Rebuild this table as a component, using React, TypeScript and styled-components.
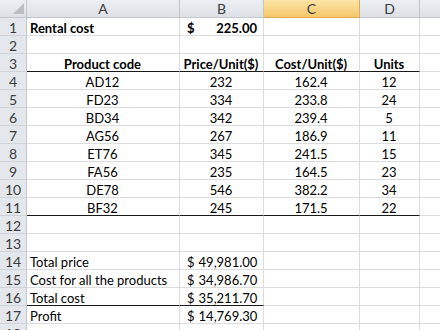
import styled, { createGlobalStyle, css } from "styled-components";

const GlobalStyle = createGlobalStyle`
  body {
    margin: 0;
    background: #fff;
  }
`;

const Sheet = styled.div`
  display: grid;
  grid-template-columns: 27px 153px 84px 96px 60px 40px;
  grid-auto-rows: 18px;
  width: 440px;
  height: 330px;
  overflow: hidden;
  font-family: Lato, "Liberation Sans", sans-serif;
  font-size: 13px;
  color: #000;
`;

const Corner = styled.div`
  background: linear-gradient(#eceff3, #dde1e6);
  border-right: 1px solid #c3c7cc;
  border-bottom: 1px solid #c3c7cc;
  box-sizing: border-box;
  display: flex;
  align-items: flex-end;
  justify-content: flex-end;
  padding: 0 2px 3px 0;
`;

const ColHead = styled.div<{ $selected?: boolean }>`
  box-sizing: border-box;
  display: flex;
  align-items: center;
  justify-content: center;
  color: #3c3c3c;
  font-size: 14px;
  background: linear-gradient(#eceff3, #dde1e6);
  border-right: 1px solid #c3c7cc;
  border-bottom: 1px solid #c3c7cc;
  ${(p) =>
    p.$selected &&
    css`
      background: linear-gradient(#fbe4a6, #f5c86a);
      border-right-color: #e2ab4f;
      border-bottom-color: #e2ab4f;
    `}
`;

const RowHead = styled.div`
  box-sizing: border-box;
  display: flex;
  align-items: center;
  justify-content: center;
  padding-top: 1px;
  font-size: 14px;
  color: #3c3c3c;
  background: #e4e8ed;
  border-right: 1px solid #c3c7cc;
  border-bottom: 1px solid #cfd3d8;
`;

const Cell = styled.div<{ $align?: "left" | "center" | "right"; $bold?: boolean; $line?: boolean }>`
  box-sizing: border-box;
  display: flex;
  align-items: center;
  justify-content: ${(p) =>
    p.$align === "center" ? "center" : p.$align === "right" ? "flex-end" : "flex-start"};
  padding: 2px 4px 0 3px;
  font-weight: ${(p) => (p.$bold ? 700 : 400)};
  white-space: nowrap;
  border-right: 1px solid #dadcdd;
  border-bottom: 1px solid ${(p) => (p.$line ? "#1a1a1a" : "#dadcdd")};
`;

const Money = styled(Cell)`
  justify-content: space-between;
  gap: 4px;
  padding: 2px 6px 0 7px;
`;

const products = [
  ["AD12", 232, "162.4", 12],
  ["FD23", 334, "233.8", 24],
  ["BD34", 342, "239.4", 5],
  ["AG56", 267, "186.9", 11],
  ["ET76", 345, "241.5", 15],
  ["FA56", 235, "164.5", 23],
  ["DE78", 546, "382.2", 34],
  ["BF32", 245, "171.5", 22],
];

const totals = [
  ["Total price", "49,981.00"],
  ["Cost for all the products", "34,986.70"],
  ["Total cost", "35,211.70"],
  ["Profit", "14,769.30"],
];

function Blank({ n }: { n: number }) {
  return (
    <>
      {Array.from({ length: n }, (_, i) => (
        <Cell key={i} />
      ))}
    </>
  );
}

export default function App() {
  return (
    <>
      <GlobalStyle />
      <Sheet>
        <Corner>
          <svg width="11" height="11" viewBox="0 0 11 11">
            <polygon points="11,0 11,11 0,11" fill="#b9bec5" />
          </svg>
        </Corner>
        <ColHead>A</ColHead>
        <ColHead>B</ColHead>
        <ColHead $selected>C</ColHead>
        <ColHead>D</ColHead>
        <ColHead />

        <RowHead>1</RowHead>
        <Cell $bold>Rental cost</Cell>
        <Money $bold>
          <span>$</span>
          <span>225.00</span>
        </Money>
        <Blank n={3} />

        <RowHead>2</RowHead>
        <Blank n={5} />

        <RowHead>3</RowHead>
        <Cell $bold $align="center" $line>Product code</Cell>
        <Cell $bold $align="center" $line>Price/Unit($)</Cell>
        <Cell $bold $align="center" $line>Cost/Unit($)</Cell>
        <Cell $bold $align="center" $line>Units</Cell>
        <Cell />

        {products.map(([code, price, cost, units], i) => {
          const last = i === products.length - 1;
          return (
            <div key={code} style={{ display: "contents" }}>
              <RowHead>{i + 4}</RowHead>
              <Cell $align="center" $line={last}>{code}</Cell>
              <Cell $align="center" $line={last}>{price}</Cell>
              <Cell $align="center" $line={last}>{cost}</Cell>
              <Cell $align="center" $line={last}>{units}</Cell>
              <Cell />
            </div>
          );
        })}

        <RowHead>12</RowHead>
        <Blank n={5} />
        <RowHead>13</RowHead>
        <Blank n={5} />

        {totals.map(([label, value], i) => (
          <div key={label} style={{ display: "contents" }}>
            <RowHead>{i + 14}</RowHead>
            <Cell $line={i === 2}>{label}</Cell>
            <Money $line={i === 2}>
              <span>$</span>
              <span>{value}</span>
            </Money>
            <Blank n={3} />
          </div>
        ))}

        <RowHead>18</RowHead>
        <Blank n={5} />
      </Sheet>
    </>
  );
}
